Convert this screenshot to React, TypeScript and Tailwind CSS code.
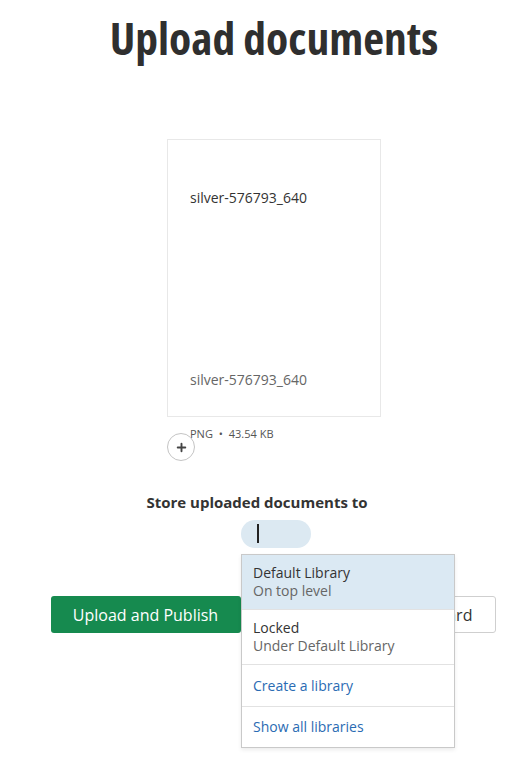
import { Plus } from 'lucide-react'

const libraries = [
  { name: 'Default Library', sub: 'On top level', active: true },
  { name: 'Locked', sub: 'Under Default Library', active: false },
]

const App = () => {
  return (
    <div className="min-h-screen bg-white pl-[18px] font-['Open_Sans',sans-serif] text-[#333]">
      <h1 className="mt-[10px] text-center text-[45.5px] leading-[54px] font-bold [font-stretch:condensed] text-[#2f2f2f]">
        Upload documents
      </h1>

      <div className="relative mx-auto mt-[75px] w-[214px]">
        <div className="flex h-[278px] flex-col justify-between border border-[#e8e8e8] pt-[48px] pb-[26px] pl-[22px] text-[14px] leading-[20px]">
          <p className="text-[#333]">silver-576793_640</p>
          <p className="text-[#666]">silver-576793_640</p>
        </div>
        <p className="mt-[9px] pl-[23px] text-[11px] leading-[16px] text-[#555]">
          PNG <span className="mx-[3px]">•</span> 43.54 KB
        </p>
        <button className="absolute left-0 top-[294px] flex h-7 w-7 items-center justify-center rounded-full border border-[#c4c4c4] bg-white">
          <Plus size={13} strokeWidth={3.5} className="text-[#444]" />
        </button>
      </div>

      <p className="mt-[50px] pr-[34px] text-center text-[15px] leading-[20px] font-bold text-[#333]">
        Store uploaded documents to
      </p>

      <div className="mt-[8px] flex justify-center pl-[4px]">
        <div className="relative h-7 w-[70px] rounded-full bg-[#dce9f2]">
          <span className="absolute left-[16px] top-[4px] h-[19px] w-[2px] bg-[#222]"></span>
          <div className="absolute left-0 top-[34px] z-10 w-[214px] border border-[#c9c9c9] bg-white text-[14px] leading-[18px] shadow-[0_2px_4px_rgba(0,0,0,0.08)]">
            {libraries.map((lib) => (
              <div
                key={lib.name}
                className={`border-b border-[#e2e2e2] py-[9px] pl-[11px] ${lib.active ? 'bg-[#dbe9f3]' : ''}`}
              >
                <p className="text-[#333]">{lib.name}</p>
                <p className="text-[#666]">{lib.sub}</p>
              </div>
            ))}
            <div className="border-b border-[#e2e2e2] pt-[12px] pb-[11px] pl-[11px] text-[#2a6bb3]">Create a library</div>
            <div className="py-[11px] pl-[11px] text-[#2a6bb3]">Show all libraries</div>
          </div>
        </div>
      </div>

      <div className="mt-[48px] flex justify-center gap-[10px] pr-[2px]">
        <button className="h-[37px] w-[190px] rounded-[3px] bg-[#168a4f] text-[16px] text-white">
          Upload and Publish
        </button>
        <button className="h-[37px] w-[245px] rounded-[3px] border border-[#cfcfcf] bg-white text-[16px] text-[#333]">
          Save and Go to Dashboard
        </button>
      </div>
    </div>
  )
}

export default App
